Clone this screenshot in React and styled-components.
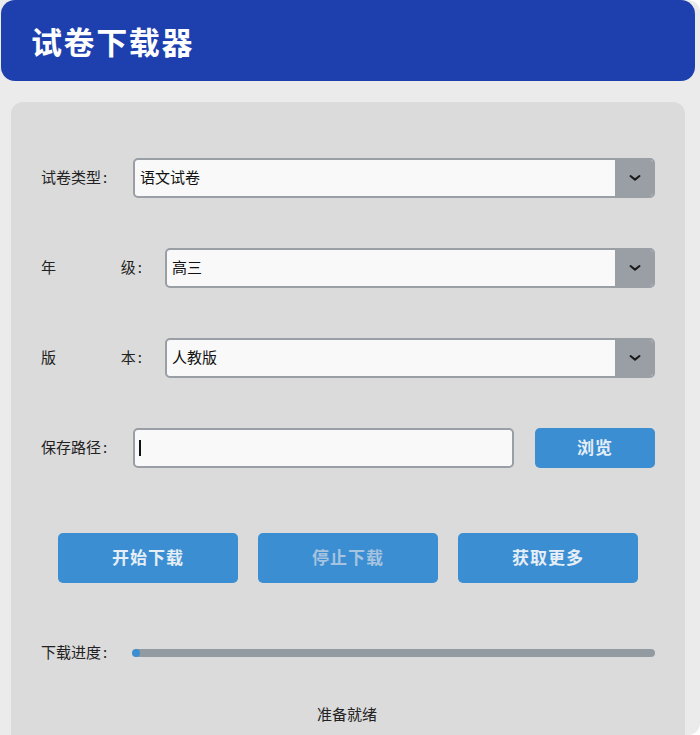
import React from "react";
import styled, { createGlobalStyle } from "styled-components";

const Global = createGlobalStyle`
  html, body { margin: 0; padding: 0; background: #ffffff; }
  body { font-family: "Noto Sans CJK SC", "Noto Sans", sans-serif; }
  * { box-sizing: border-box; }
`;

const Window = styled.div`
  width: 700px;
  height: 735px;
  background: #ebebeb;
  border-radius: 0 12px 12px 0;
  overflow: hidden;
  padding-left: 1px;
`;

const Header = styled.header`
  width: 694px;
  height: 81px;
  background: #1e3fae;
  border-radius: 14px;
  display: flex;
  align-items: center;
  padding-left: 30px;
`;

const Title = styled.h1`
  margin: 0;
  color: #ffffff;
  font-size: 31px;
  font-weight: 700;
  letter-spacing: 1.6px;
  line-height: 1;
  padding-bottom: 1px;
`;

const Panel = styled.main`
  margin: 21px 0 0 10px;
  width: 674px;
  height: 660px;
  background: #dbdbdb;
  border-radius: 12px 12px 0 0;
  padding: 56px 30px 0 30px;
  display: flex;
  flex-direction: column;
`;

const Form = styled.div`
  display: flex;
  flex-direction: column;
  gap: 50px;
`;

const Row = styled.div`
  display: flex;
  align-items: center;
  height: 40px;
  gap: ${(p) => p.$gap || 24}px;
`;

const Label = styled.div`
  width: ${(p) => p.$width}px;
  flex: none;
  display: flex;
  justify-content: ${(p) => (p.$spread ? "space-between" : "flex-start")};
  font-size: 15px;
  line-height: 1;
  padding-bottom: 3px;
  color: #222222;
  white-space: nowrap;
`;

const Colon = styled.span`
  margin-left: 2px;
`;

const Select = styled.div`
  flex: 1;
  height: 40px;
  display: flex;
  border: 2px solid #9a9ea5;
  border-radius: 5px;
  overflow: hidden;
  background: #f9f9f9;
`;

const SelectValue = styled.div`
  flex: 1;
  display: flex;
  align-items: center;
  padding: 0 0 3px 5px;
  font-size: 15px;
  line-height: 1;
  color: #111111;
`;

const Arrow = styled.div`
  width: 38px;
  flex: none;
  background: #9a9ea5;
  display: flex;
  align-items: center;
  justify-content: center;
  padding-left: 1px;
`;

const TextField = styled.div`
  width: 381px;
  height: 40px;
  flex: none;
  border: 2px solid #9a9ea5;
  border-radius: 5px;
  background: #f9f9f9;
  display: flex;
  align-items: center;
  padding-left: 4px;
`;

const Caret = styled.span`
  width: 2px;
  height: 16px;
  background: #111111;
`;

const Button = styled.button`
  border: none;
  border-radius: 5px;
  background: #3b8ed2;
  color: ${(p) => (p.disabled ? "#a6c3df" : "#e6eef7")};
  font-family: "Noto Sans CJK SC", "Noto Sans", sans-serif;
  font-weight: 700;
  font-size: 17px;
  line-height: 1;
  letter-spacing: 1px;
  width: ${(p) => p.$w}px;
  height: ${(p) => p.$h}px;
  margin-left: ${(p) => p.$ml || 0}px;
  padding: 0 0 3px 0;
  cursor: pointer;
`;

const ButtonRow = styled.div`
  margin-top: 65px;
  display: flex;
  justify-content: center;
  gap: 20px;
`;

const ProgressRow = styled.div`
  margin-top: 59px;
  display: flex;
  align-items: center;
  height: 22px;
  gap: 23px;
`;

const Track = styled.div`
  flex: 1;
  height: 8px;
  border-radius: 4px;
  background: #939ba2;
  overflow: hidden;
`;

const Fill = styled.div`
  height: 100%;
  background: #3b8ed2;
  border-radius: 4px;
`;

const Status = styled.div`
  margin-top: 42px;
  text-align: center;
  font-size: 15px;
  line-height: 1;
  color: #222222;
  padding-right: 2px;
`;

const Chevron = () => (
  <svg width="12" height="8" viewBox="0 0 12 8">
    <path d="M1.5 2 L6 5.6 L10.5 2" fill="none" stroke="#1a1a1a" strokeWidth="2" strokeLinecap="round" strokeLinejoin="round" />
  </svg>
);

const Dropdown = ({ value }) => (
  <Select>
    <SelectValue>{value}</SelectValue>
    <Arrow>
      <Chevron />
    </Arrow>
  </Select>
);

export default function App() {
  const progress = 1.5;
  return (
    <>
      <Global />
      <Window>
        <Header>
          <Title>试卷下载器</Title>
        </Header>
        <Panel>
          <Form>
            <Row>
              <Label $width={68}>
                试卷类型<Colon>:</Colon>
              </Label>
              <Dropdown value="语文试卷" />
            </Row>
            <Row $gap={23}>
              <Label $width={101} $spread>
                <span>年</span>
                <span>
                  级<Colon>:</Colon>
                </span>
              </Label>
              <Dropdown value="高三" />
            </Row>
            <Row $gap={23}>
              <Label $width={101} $spread>
                <span>版</span>
                <span>
                  本<Colon>:</Colon>
                </span>
              </Label>
              <Dropdown value="人教版" />
            </Row>
            <Row>
              <Label $width={68}>
                保存路径<Colon>:</Colon>
              </Label>
              <TextField>
                <Caret />
              </TextField>
              <Button $w={120} $h={40} $ml={-3}>
                浏览
              </Button>
            </Row>
          </Form>
          <ButtonRow>
            <Button $w={180} $h={50}>开始下载</Button>
            <Button $w={180} $h={50} disabled>
              停止下载
            </Button>
            <Button $w={180} $h={50}>获取更多</Button>
          </ButtonRow>
          <ProgressRow>
            <Label $width={68}>
              下载进度<Colon>:</Colon>
            </Label>
            <Track>
              <Fill style={{ width: `${progress}%` }} />
            </Track>
          </ProgressRow>
          <Status>准备就绪</Status>
        </Panel>
      </Window>
    </>
  );
}
